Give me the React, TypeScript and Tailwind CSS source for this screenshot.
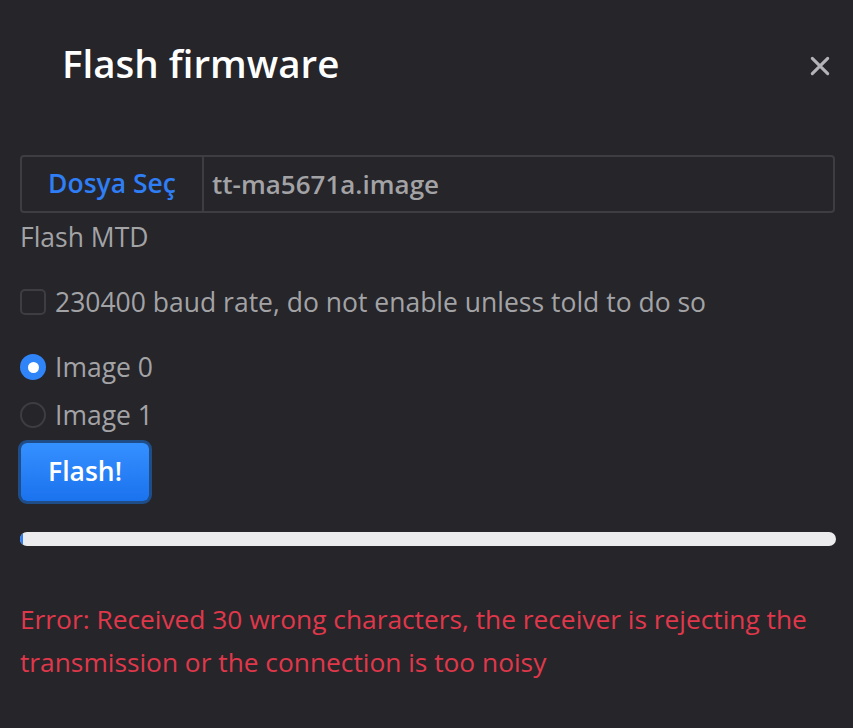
import React from "react";

export default function App() {
  return (
    <div className="min-h-[728px] w-full bg-[#25252a] font-['Open_Sans',sans-serif] text-[#a3a3a6]">
      {/* header */}
      <div className="flex h-[128px] items-start justify-between pl-[62px] pr-[21px] pt-[39px]">
        <h1 className="text-[38.5px] font-semibold leading-[48px] text-white">Flash firmware</h1>
        <button className="mt-[15px] flex h-[24px] w-[24px] items-center justify-center text-[#b4b4b8]">
          <svg width="22" height="22" viewBox="0 0 20 20" fill="none" stroke="currentColor" strokeWidth="2.8" strokeLinecap="round">
            <path d="M3 3 L17 17 M17 3 L3 17" />
          </svg>
        </button>
      </div>

      <div className="px-[20px] pt-[27px]">
        {/* file picker */}
        <div className="flex h-[58px] w-[815px] overflow-hidden rounded-[4px] border-2 border-[#3d3d42]">
          <div className="flex w-[182px] items-center justify-center border-r-2 border-[#3d3d42] text-[26.5px] font-semibold text-[#2f7ef5]">
            Dosya Seç
          </div>
          <div className="flex items-center pl-[8px] text-[26px] font-semibold text-[#a3a3a6]">tt-ma5671a.image</div>
        </div>
        <div className="mt-[6px] text-[26.5px] leading-[36px]">Flash MTD</div>

        {/* baud */}
        <label className="mt-[29px] flex items-center gap-[9px] text-[26.5px] leading-[36px]">
          <span className="h-[26px] w-[26px] shrink-0 rounded-[5px] border-2 border-[#3d3d42]" />
          230400 baud rate, do not enable unless told to do so
        </label>

        {/* images */}
        <label className="mt-[29px] flex items-center gap-[9px] text-[26.5px] leading-[36px]">
          <span className="flex h-[26px] w-[26px] shrink-0 items-center justify-center rounded-full bg-[#2f84f8]">
            <span className="h-[11px] w-[11px] rounded-full bg-white" />
          </span>
          Image 0
        </label>
        <label className="mt-[12px] flex items-center gap-[9px] text-[26.5px] leading-[36px]">
          <span className="h-[26px] w-[26px] shrink-0 rounded-full border-2 border-[#3d3d42]" />
          Image 1
        </label>

        <button className="ml-[-2px] mt-[7px] rounded-[9px] border-[3px] border-[#1f4d87] bg-[#25252a]">
          <span className="flex h-[58px] w-[128px] items-center justify-center rounded-[6px] bg-gradient-to-b from-[#3590ff] to-[#1b72ee] text-[26.5px] font-semibold text-white">
            Flash!
          </span>
        </button>

        {/* progress */}
        <div className="mt-[28px] h-[14px] w-[816px] overflow-hidden rounded-full bg-[#ececee]">
          <div className="h-full w-[3px] bg-[#2f7ef5]" />
        </div>

        <p className="mt-[52px] w-[810px] text-[26.3px] leading-[43px] text-[#e0384a]">
          Error: Received 30 wrong characters, the receiver is rejecting the transmission or the connection is too noisy
        </p>
      </div>
    </div>
  );
}
